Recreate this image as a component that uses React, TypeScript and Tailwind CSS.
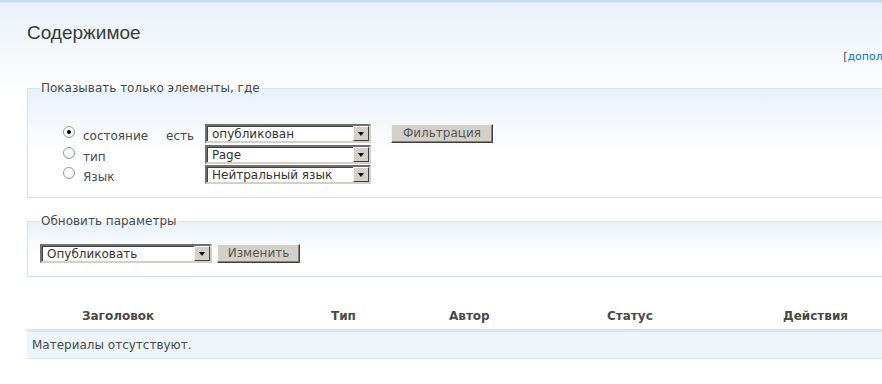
import React from "react";

function Radio({ checked }: { checked?: boolean }) {
  return (
    <span className="mr-[8px] mt-[-4px] flex h-[12px] w-[12px] items-center justify-center rounded-full border border-[#9a9a9a] bg-[radial-gradient(circle_at_40%_40%,#ffffff_40%,#dcdcdc_100%)]">
      {checked && <span className="h-[4px] w-[4px] rounded-full bg-black" />}
    </span>
  );
}

function Select({ value, width }: { value: string; width: string }) {
  return (
    <div
      className={`flex h-[19px] ${width} items-stretch border-2 border-t-[#6f6f6f] border-l-[#6f6f6f] border-r-[#d4d0c8] border-b-[#d4d0c8] bg-white shadow-[inset_1px_1px_0_#404040]`}
    >
      <span className="flex-1 pl-[5px] pt-[1px] leading-[14px] text-[#333]">{value}</span>
      <span className="flex w-[16px] items-center justify-center border border-t-white border-l-white border-r-[#404040] border-b-[#404040] bg-[#d4d0c8]">
        <span className="h-0 w-0 border-x-[3.5px] border-t-[4px] border-x-transparent border-t-black" />
      </span>
    </div>
  );
}

function Button({ label, width }: { label: string; width: string }) {
  return (
    <button
      className={`h-[19px] ${width} border border-t-[#f4f4f4] border-l-[#f4f4f4] border-r-[#404040] border-b-[#404040] bg-[#d4d0c8] text-center leading-[15px] text-[#555] shadow-[inset_-1px_-1px_0_#808080]`}
    >
      {label}
    </button>
  );
}

export default function App() {
  return (
    <div className="h-[384px] w-[882px] overflow-hidden bg-[linear-gradient(to_bottom,#c7dbef_0px,#c7dbef_2px,#e8f1f9_3px,#ffffff_95px)] font-['DejaVu_Sans',Verdana,sans-serif] text-[12px] text-[#494949]">
      <div className="w-[1003px] pl-[27px] pt-[20px]">
        <h2 className="font-['Liberation_Sans',Arial,sans-serif] text-[19px] leading-[26px] text-[#3a3a3a]">
          Содержимое
        </h2>
        <div className="mt-[4px] flex justify-end pr-[4px] text-[11px] leading-[14px]">
          <span>
            [<span className="text-[#027ac6]">дополнительная справка</span>]
          </span>
        </div>

        <fieldset className="mt-[15px] border border-[#d3e4f2] bg-linear-to-b from-[#e8f1fa] to-white to-60% px-[12px] pb-[13px] pt-[27px]">
          <legend className="px-[1px] leading-[18px]">Показывать только элементы, где</legend>
          <div className="ml-[23px] flex flex-col">
            <div className="flex h-[19px] items-center">
              <div className="flex w-[103px] items-center">
                <Radio checked />
                <span className="pt-[4px]">состояние</span>
              </div>
              <span className="w-[39px] pt-[4px]">есть</span>
              <Select value="опубликован" width="w-[166px]" />
              <div className="ml-[20px]">
                <Button label="Фильтрация" width="w-[102px]" />
              </div>
            </div>
            <div className="mt-[2px] flex h-[19px] items-center">
              <div className="flex w-[142px] items-center">
                <Radio />
                <span className="pt-[4px]">тип</span>
              </div>
              <Select value="Page" width="w-[166px]" />
            </div>
            <div className="mt-[1px] flex h-[19px] items-center">
              <div className="flex w-[142px] items-center">
                <Radio />
                <span className="pt-[4px]">Язык</span>
              </div>
              <Select value="Нейтральный язык" width="w-[166px]" />
            </div>
          </div>
        </fieldset>

        <fieldset className="mt-[14px] border border-[#d3e4f2] bg-linear-to-b from-[#e8f1fa] to-white to-60% px-[12px] pb-[13px] pt-[14px]">
          <legend className="px-[1px] leading-[18px]">Обновить параметры</legend>
          <div className="flex items-center gap-[5px]">
            <Select value="Опубликовать" width="w-[172px]" />
            <Button label="Изменить" width="w-[83px]" />
          </div>
        </fieldset>

        <div className="mt-[25px]">
          <div className="grid h-[29px] grid-cols-[304px_118px_158px_176px_1fr] items-center border-b-2 border-[#d3e7f4] font-bold text-[#494949]">
            <span className="pl-[55px]">Заголовок</span>
            <span>Тип</span>
            <span>Автор</span>
            <span>Статус</span>
            <span>Действия</span>
          </div>
          <div className="flex h-[28px] items-center border-y border-[#d3e7f4] bg-[#edf5fa] pl-[5px]">
            Материалы отсутствуют.
          </div>
        </div>
      </div>
    </div>
  );
}
